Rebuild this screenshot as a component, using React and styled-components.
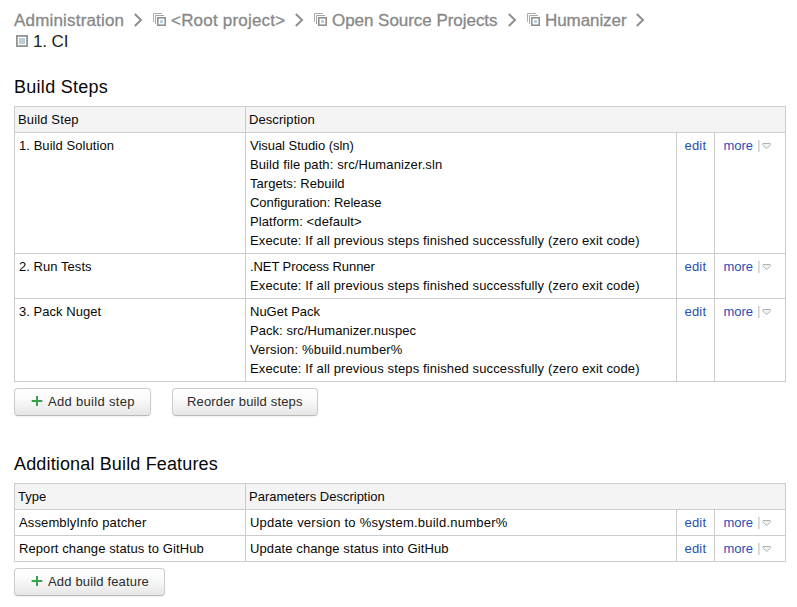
import React from "react";
import styled, { createGlobalStyle } from "styled-components";

const GlobalStyle = createGlobalStyle`
  * { box-sizing: border-box; }
  body {
    margin: 0;
    background: #fff;
    color: #080808;
    font: 13px/19px "Liberation Sans", Arial, sans-serif;
  }
`;

const Page = styled.main`
  width: 797px;
  height: 607px;
  padding: 10px 11px 0 14px;
  overflow: hidden;
`;

const Text = styled.span`
  letter-spacing: ${(p) => p.$track || 0}px;
  white-space: nowrap;
`;

const Breadcrumbs = styled.nav`
  height: 42px;
  font-size: 17px;
  line-height: 21px;
`;

const Trail = styled.div`
  display: flex;
  height: 21px;
`;

const Crumb = styled.div`
  display: flex;
  width: ${(p) => p.$width}px;
  padding-left: ${(p) => (p.$icon ? 10 : 0)}px;
  color: #888;
  -webkit-text-stroke: 0.3px #888;
`;

const CrumbIcon = styled.svg`
  flex: none;
  width: 13px;
  height: 13px;
  margin: 3px 5px 0 0;
`;

const Chevron = styled.svg`
  flex: none;
  width: 9px;
  height: 14px;
  margin: 3px 0 0 auto;
`;

const Current = styled.div`
  display: flex;
  color: #222;
`;

const CurrentIcon = styled.svg`
  flex: none;
  width: 12px;
  height: 12px;
  margin: 4px 5px 0 2px;
`;

const Heading = styled.h2`
  margin: ${(p) => p.$top}px 0 8px;
  font-size: 18px;
  font-weight: 400;
  line-height: 22px;
`;

const Table = styled.div`
  border: 1px solid #ccc;
  border-bottom: 0;
  width: 772px;
`;

const Row = styled.div`
  display: grid;
  grid-template-columns: 230px 431px 38px 71px;
  border-bottom: 1px solid #ccc;
`;

const HeaderRow = styled(Row)`
  grid-template-columns: 230px 540px;
  background: #f4f4f4;
`;

const Cell = styled.div`
  display: flex;
  flex-direction: column;
  padding: 3px 0 3px 4px;
  & + & { border-left: 1px solid #ccc; }
`;

const HeaderCell = styled(Cell)`
  padding-left: 3px;
`;

const ActionCell = styled(Cell)`
  flex-direction: row;
  align-items: flex-start;
  padding-left: ${(p) => p.$inset}px;
  color: #1f4fba;
`;

const MenuArrow = styled.svg`
  flex: none;
  width: 14px;
  height: 12px;
  margin: 4px 0 0 auto;
`;

const MoreLink = styled.span`
  display: flex;
  width: 48px;
`;

const Buttons = styled.div`
  display: flex;
  gap: 21px;
  margin-top: 6px;
`;

const Button = styled.button`
  display: flex;
  align-items: center;
  width: ${(p) => p.$width}px;
  height: 28px;
  padding: 0 0 1px ${(p) => (p.$icon ? 16 : 14)}px;
  border: 1px solid #ccc;
  border-bottom-color: #b9b9b9;
  border-radius: 4px;
  background: linear-gradient(#fff, #fbfbfb 35%, #e6e6e6);
  box-shadow: 0 1px 2px rgba(0, 0, 0, 0.06);
  color: #2b2b2b;
  font: inherit;
`;

const Plus = styled.svg`
  flex: none;
  width: 12px;
  height: 11px;
  margin-right: 5px;
`;

const EXECUTE = ["Execute: If all previous steps finished successfully (zero exit code)", 0.128];

const STEPS = [
  {
    name: ["1. Build Solution", 0.06],
    lines: [
      ["Visual Studio (sln)", -0.04],
      ["Build file path: src/Humanizer.sln", 0.11],
      ["Targets: Rebuild", 0.04],
      ["Configuration: Release", -0.04],
      ["Platform: <default>", 0.1],
      EXECUTE,
    ],
  },
  { name: ["2. Run Tests", 0.05], lines: [[".NET Process Runner", -0.08], EXECUTE] },
  {
    name: ["3. Pack Nuget", 0.04],
    lines: [
      ["NuGet Pack", 0],
      ["Pack: src/Humanizer.nuspec", 0.05],
      ["Version: %build.number%", 0.16],
      EXECUTE,
    ],
  },
];

const FEATURES = [
  { name: ["AssemblyInfo patcher", 0.12], lines: [["Update version to %system.build.number%", 0.23]] },
  { name: ["Report change status to GitHub", 0.09], lines: [["Update change status into GitHub", 0.11]] },
];

function ProjectIcon() {
  return (
    <CrumbIcon viewBox="0 0 13 13" fill="none">
      <path d="M.5 9V.5H9" stroke="#adadad" />
      <path d="M2.5 11V2.5H11" stroke="#a6a6a6" />
      <rect x="4.8" y="4.8" width="7.4" height="7.4" fill="#fff" stroke="#919191" strokeWidth="1.6" />
      <rect x="7" y="7" width="3" height="3" fill="#b3d0ea" />
    </CrumbIcon>
  );
}

function Separator() {
  return (
    <Chevron viewBox="0 0 9 14" fill="none">
      <path d="M.8 1L7 7L.8 13" stroke="#8f8f8f" strokeWidth="2" />
    </Chevron>
  );
}

function BreadcrumbItem({ label, track, width, icon }) {
  return (
    <Crumb $width={width} $icon={icon}>
      {icon && <ProjectIcon />}
      <Text $track={track}>{label}</Text>
      <Separator />
    </Crumb>
  );
}

function DataTable({ columns, rows }) {
  return (
    <Table>
      <HeaderRow>
        {columns.map(([label, track]) => (
          <HeaderCell key={label}><Text $track={track}>{label}</Text></HeaderCell>
        ))}
      </HeaderRow>
      {rows.map(({ name, lines }) => (
        <Row key={name[0]}>
          <Cell><Text $track={name[1]}>{name[0]}</Text></Cell>
          <Cell>
            {lines.map(([line, track]) => <Text key={line} $track={track}>{line}</Text>)}
          </Cell>
          <ActionCell $inset={7.5}><Text $track={0.2}>edit</Text></ActionCell>
          <ActionCell $inset={8.5}>
            <MoreLink>
              <Text $track={-0.05}>more</Text>
              <MenuArrow viewBox="0 0 14 12" fill="none">
                <path d="M.9 0V12" stroke="#b5b5b5" />
                <path d="M5 3.5H12.2Q13 4.5 12.2 5.2L9.7 7.8Q8.7 8.6 7.6 7.8L5.1 5.2Q4.2 4.5 5 3.5Z" fill="#f2f2f2" stroke="#b0b0b0" />
              </MenuArrow>
            </MoreLink>
          </ActionCell>
        </Row>
      ))}
    </Table>
  );
}

function ActionButton({ label, track, width, icon }) {
  return (
    <Button $width={width} $icon={icon}>
      {icon && (
        <Plus viewBox="0 0 12 11">
          <path d="M6 0V10M.7 5H11.3" stroke="#36a34c" strokeWidth="2" />
        </Plus>
      )}
      <Text $track={track}>{label}</Text>
    </Button>
  );
}

export default function App() {
  return (
    <Page>
      <GlobalStyle />
      <Breadcrumbs>
        <Trail>
          <BreadcrumbItem width={129} label="Administration" track={0.18} />
          <BreadcrumbItem icon width={161} label="<Root project>" track={0.2} />
          <BreadcrumbItem icon width={213} label="Open Source Projects" track={-0.04} />
          <BreadcrumbItem icon width={128} label="Humanizer" track={-0.08} />
        </Trail>
        <Current>
          <CurrentIcon viewBox="0 0 12 12">
            <rect x=".9" y=".9" width="10.2" height="10.2" fill="#fff" stroke="#949494" strokeWidth="1.8" />
            <rect x="3" y="3" width="6" height="6" fill="#b9cedb" />
          </CurrentIcon>
          <Text $track={-0.1}>1. CI</Text>
        </Current>
      </Breadcrumbs>

      <Heading $top={24}><Text $track={0.28}>Build Steps</Text></Heading>
      <DataTable columns={[["Build Step", 0.14], ["Description", 0.08]]} rows={STEPS} />
      <Buttons>
        <ActionButton icon width={137} label="Add build step" track={0.31} />
        <ActionButton width={146} label="Reorder build steps" track={0.15} />
      </Buttons>

      <Heading $top={37}><Text $track={0.15}>Additional Build Features</Text></Heading>
      <DataTable columns={[["Type", 0], ["Parameters Description", 0]]} rows={FEATURES} />
      <Buttons>
        <ActionButton icon width={151} label="Add build feature" track={0.16} />
      </Buttons>
    </Page>
  );
}
